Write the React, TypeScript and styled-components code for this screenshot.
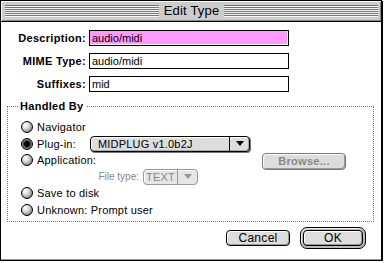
import React from "react";
import styled, { createGlobalStyle } from "styled-components";

const GlobalStyle = createGlobalStyle`
  html, body {
    margin: 0;
    padding: 0;
    background: #fff;
  }
  body {
    font-family: "Liberation Sans", Arial, sans-serif;
    color: #000;
  }
  * { box-sizing: border-box; }
`;

const Window = styled.div`
  width: 382px;
  height: 261px;
  border: 1px solid #000;
  box-shadow: 1px 1px 0 #000;
  display: flex;
  flex-direction: column;
  background: #ccc;
`;

const TitleBar = styled.div`
  height: 21px;
  display: flex;
  align-items: center;
  padding: 0 3px 1px 4px;
  background: #cccccc;
  border-bottom: 1px solid #000;
  box-shadow: inset 1px 1px 0 #fff, inset -1px -1px 0 #888;
`;

const Stripes = styled.div`
  flex: 1;
  height: 12px;
  background: repeating-linear-gradient(
    to bottom,
    #777 0,
    #777 1px,
    #f4f4f4 1px,
    #f4f4f4 2px
  );
`;

const Title = styled.div`
  padding: 0 5px;
  font-size: 13px;
  line-height: 16px;
  letter-spacing: 0.2px;
`;

const Content = styled.div`
  flex: 1;
  background: #fff;
  display: flex;
  flex-direction: column;
  padding-top: 8px;
  border-bottom: 1px solid #999;
`;

const FieldGrid = styled.div`
  display: grid;
  grid-template-columns: 80px 200px;
  column-gap: 2px;
  row-gap: 7px;
  padding-left: 6px;
  align-items: center;
`;

const FieldLabel = styled.label`
  text-align: right;
  padding-right: 1px;
  font-size: 11px;
  font-weight: bold;
  letter-spacing: 0.3px;
`;

const Field = styled.div<{ $selected?: boolean }>`
  height: 16px;
  border: 1px solid #000;
  padding-left: 2px;
  font-size: 11px;
  line-height: 14px;
  background: ${(p) => (p.$selected ? "#ff99ff" : "#fff")};
  box-shadow: ${(p) => (p.$selected ? "inset -1px -1px 0 #fff" : "none")};
`;

const Group = styled.fieldset`
  margin: 8px 7px 0 6px;
  padding: 6px 0 3px 0;
  border: 1px dotted #777;
`;

const Legend = styled.legend`
  margin-left: 10px;
  padding: 0 2px;
  font-size: 11px;
  font-weight: bold;
  letter-spacing: 0.3px;
  line-height: 13px;
`;

const OptionRow = styled.div`
  height: 16.5px;
  display: flex;
  align-items: center;
  padding-left: 13px;
  padding-right: 27px;
`;

const SubRow = styled(OptionRow)`
  padding-left: 82px;
`;

const Radio = styled.span<{ $checked?: boolean }>`
  width: 12px;
  height: 12px;
  border-radius: 50%;
  border: 1px solid #000;
  flex: none;
  background: ${(p) =>
    p.$checked
      ? "radial-gradient(circle at 50% 50%, #000 0, #000 2.5px, #333 3px, #777 4.5px, #aaa 6px)"
      : "radial-gradient(circle at 35% 32%, #fff 0, #eee 2px, #bbb 5px, #888 7px)"};
`;

const OptionLabel = styled.span<{ $width?: number }>`
  margin-left: 4px;
  font-size: 11px;
  letter-spacing: 0.2px;
  width: ${(p) => (p.$width ? `${p.$width}px` : "auto")};
  flex: none;
`;

const SubLabel = styled.span`
  width: 49px;
  text-align: right;
  font-size: 10px;
  color: #888;
  margin-right: 4px;
`;

const Popup = styled.div<{ $width: number; $disabled?: boolean }>`
  width: ${(p) => p.$width}px;
  height: 16px;
  display: flex;
  border: 1px solid ${(p) => (p.$disabled ? "#999" : "#000")};
  border-radius: 4px;
  background: ${(p) => (p.$disabled ? "#e6e6e6" : "#dddddd")};
  box-shadow: ${(p) =>
    p.$disabled
      ? "inset 1px 1px 0 #fff"
      : "inset 1px 1px 0 #fff, inset -1px -1px 0 #aaa, 1px 1px 0 #777"};
  color: ${(p) => (p.$disabled ? "#888" : "#000")};
  font-size: 11px;
  line-height: 14px;
`;

const PopupText = styled.span<{ $center?: boolean }>`
  flex: 1;
  padding-left: ${(p) => (p.$center ? "0" : "7px")};
  text-align: ${(p) => (p.$center ? "center" : "left")};
  letter-spacing: 0.2px;
`;

const PopupArrow = styled.span<{ $disabled?: boolean }>`
  width: 20px;
  flex: none;
  display: flex;
  align-items: center;
  justify-content: center;
  border-left: 1px solid ${(p) => (p.$disabled ? "#999" : "#000")};
  &::after {
    content: "";
    border-left: 4px solid transparent;
    border-right: 4px solid transparent;
    border-top: 5px solid ${(p) => (p.$disabled ? "#999" : "#000")};
  }
`;

const Button = styled.button<{ $width: number; $disabled?: boolean }>`
  width: ${(p) => p.$width}px;
  height: 16px;
  padding: 0;
  border: 1px solid ${(p) => (p.$disabled ? "#777" : "#000")};
  border-radius: 4px;
  background: #dddddd;
  box-shadow: inset 1px 1px 0 #fff, inset -1px -1px 0 #999;
  font-family: "Liberation Sans", Arial, sans-serif;
  font-size: 12px;
  line-height: 14px;
  letter-spacing: 0.3px;
  color: ${(p) => (p.$disabled ? "#888" : "#000")};
  font-weight: ${(p) => (p.$disabled ? "bold" : "normal")};
`;

const BrowseButton = styled(Button)`
  height: 17px;
  margin-left: auto;
  margin-top: 2px;
  font-size: 11px;
`;

const DefaultRing = styled.div`
  padding: 2px;
  border: 1px solid #000;
  border-radius: 7px;
  background: #bbb;
  box-shadow: inset 1px 1px 0 #eee;
  display: flex;
`;

const ButtonBar = styled.div`
  display: flex;
  justify-content: flex-end;
  align-items: center;
  gap: 10px;
  margin-top: 5px;
  padding-right: 15px;
`;

const App = () => {
  return (
    <>
      <GlobalStyle />
      <Window>
        <TitleBar>
          <Stripes />
          <Title>Edit Type</Title>
          <Stripes />
        </TitleBar>
        <Content>
          <FieldGrid>
            <FieldLabel>Description:</FieldLabel>
            <Field $selected>audio/midi</Field>
            <FieldLabel>MIME Type:</FieldLabel>
            <Field>audio/midi</Field>
            <FieldLabel>Suffixes:</FieldLabel>
            <Field>mid</Field>
          </FieldGrid>
          <Group>
            <Legend>Handled By</Legend>
            <OptionRow>
              <Radio />
              <OptionLabel>Navigator</OptionLabel>
            </OptionRow>
            <OptionRow>
              <Radio $checked />
              <OptionLabel $width={53}>Plug-in:</OptionLabel>
              <Popup $width={160}>
                <PopupText>MIDPLUG v1.0b2J</PopupText>
                <PopupArrow />
              </Popup>
            </OptionRow>
            <OptionRow>
              <Radio />
              <OptionLabel>Application:</OptionLabel>
              <BrowseButton $width={84} $disabled>Browse...</BrowseButton>
            </OptionRow>
            <SubRow>
              <SubLabel>File type:</SubLabel>
              <Popup $width={55} $disabled>
                <PopupText $center>TEXT</PopupText>
                <PopupArrow $disabled />
              </Popup>
            </SubRow>
            <OptionRow>
              <Radio />
              <OptionLabel>Save to disk</OptionLabel>
            </OptionRow>
            <OptionRow>
              <Radio />
              <OptionLabel>Unknown: Prompt user</OptionLabel>
            </OptionRow>
          </Group>
          <ButtonBar>
            <Button $width={64}>Cancel</Button>
            <DefaultRing>
              <Button $width={60}>OK</Button>
            </DefaultRing>
          </ButtonBar>
        </Content>
      </Window>
    </>
  );
};

export default App;
